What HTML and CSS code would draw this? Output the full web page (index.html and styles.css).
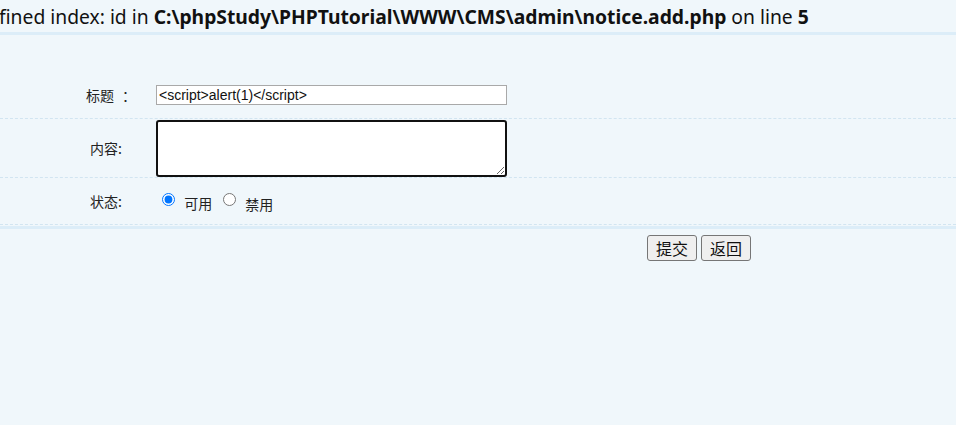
FILE: index.html
```html
<!DOCTYPE html>
<html lang="zh">
<head>
<meta charset="utf-8">
<title>notice.add</title>
<link rel="stylesheet" href="styles.css">
</head>
<body>
<div class="notice">fined index: id in <b>C:\phpStudy\PHPTutorial\WWW\CMS\admin\notice.add.php</b> on line <b>5</b></div>
<form class="form">
  <div class="row row-title">
    <div class="label">标题<span class="colon">：</span></div>
    <div class="field"><input class="text" type="text" value="<script>alert(1)</script>"></div>
  </div>
  <div class="row row-content">
    <div class="label">内容:</div>
    <div class="field"><textarea class="area"></textarea></div>
  </div>
  <div class="row row-status">
    <div class="label">状态:</div>
    <div class="field radios">
      <input type="radio" name="s" checked><span class="opt"> 可用</span>
      <input type="radio" name="s"><span class="opt opt-low"> 禁用</span>
    </div>
  </div>
  <div class="actions">
    <button type="button" class="btn">提交</button>
    <button type="button" class="btn">返回</button>
  </div>
</form>
</body>
</html>
```
FILE: styles.css
```css
html, body {
  margin: 0;
  padding: 0;
  background: #f0f7fb;
}
body {
  font-family: "Noto Sans", "Noto Sans CJK SC", sans-serif;
  color: #333;
  height: 425px;
  overflow: hidden;
}
.notice {
  font-family: "Noto Sans", "Noto Sans CJK SC", sans-serif;
  font-size: 19.3px;
  color: #111;
  white-space: nowrap;
  height: 32px;
  line-height: 34px;
  margin-left: -1px;
  border-bottom: 3px solid #dcedf8;
  overflow: hidden;
}
.notice b {
  font-weight: 700;
}
.form {
  margin: 0;
}
.row {
  display: grid;
  grid-template-columns: 156px 351px;
  align-items: center;
  border-bottom: 1px dashed #d2e5f1;
  font-family: "Noto Sans CJK SC", sans-serif;
  font-size: 14px;
}
.label {
  padding-left: 90px;
  text-align: left;
  color: #222;
  white-space: pre;
}
.row-title .label {
  padding-left: 86px;
}
.colon {
  margin-left: 8px;
}
.row-title {
  padding-top: 50px;
  padding-bottom: 13px;
}
.row-content {
  padding: 0;
  height: 58px;
}
.row-status {
  height: 46px;
}
.text {
  display: block;
  box-sizing: border-box;
  width: 351px;
  height: 20px;
  margin: 0;
  padding: 1px 2px;
  border: 1px solid #a9a9a9;
  background: #fff;
  font-family: "Liberation Sans", Arial, sans-serif;
  font-size: 14px;
  color: #111;
}
.area {
  display: block;
  box-sizing: border-box;
  width: 351px;
  height: 57px;
  margin: 1px 0 0;
  border: 2px solid #111;
  border-radius: 3px;
  background: #fff;
  outline: none;
}
.radios {
  display: flex;
  align-items: center;
  color: #222;
}
.radios input {
  width: 13px;
  height: 13px;
  margin: 0 3px 3px 6px;
  accent-color: #0075ff;
}
.opt {
  white-space: pre;
  margin-left: 3px;
  margin-right: 5px;
  margin-top: 3px;
}
.opt-low {
  margin-top: 6px;
}
.actions {
  border-top: 3px solid #dcedf8;
  margin-top: 1px;
  padding: 6px 0 0 647px;
  display: flex;
  gap: 4px;
}
.btn {
  box-sizing: border-box;
  width: 50px;
  height: 26px;
  padding: 0;
  font-family: "Noto Sans CJK SC", sans-serif;
  font-size: 16px;
  line-height: 22px;
  color: #111;
  background: #efefef;
  border: 1px solid #767676;
  border-radius: 3px;
}
```
